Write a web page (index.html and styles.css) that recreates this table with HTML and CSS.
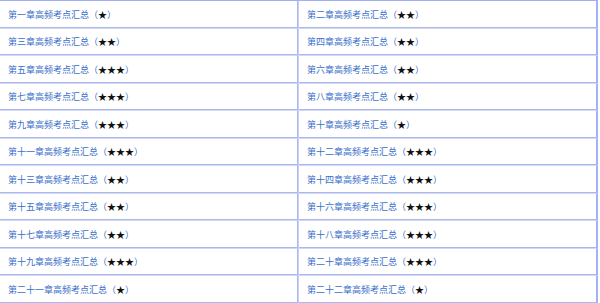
FILE: index.html
```html
<!DOCTYPE html>
<html>
<head>
<meta charset="utf-8">
<link rel="stylesheet" href="styles.css">
</head>
<body>
<div class="grid">
  <div class="cell"><a class="lnk">第一章高频考点汇总<span class="p">（<span class="st">★</span>）</span></a></div>
  <div class="cell"><a class="lnk">第二章高频考点汇总<span class="p">（<span class="st">★★</span>）</span></a></div>
  <div class="cell"><a class="lnk">第三章高频考点汇总<span class="p">（<span class="st">★★</span>）</span></a></div>
  <div class="cell"><a class="lnk">第四章高频考点汇总<span class="p">（<span class="st">★★</span>）</span></a></div>
  <div class="cell"><a class="lnk">第五章高频考点汇总<span class="p">（<span class="st">★★★</span>）</span></a></div>
  <div class="cell"><a class="lnk">第六章高频考点汇总<span class="p">（<span class="st">★★</span>）</span></a></div>
  <div class="cell"><a class="lnk">第七章高频考点汇总<span class="p">（<span class="st">★★★</span>）</span></a></div>
  <div class="cell"><a class="lnk">第八章高频考点汇总<span class="p">（<span class="st">★★</span>）</span></a></div>
  <div class="cell"><a class="lnk">第九章高频考点汇总<span class="p">（<span class="st">★★★</span>）</span></a></div>
  <div class="cell"><a class="lnk">第十章高频考点汇总<span class="p">（<span class="st">★</span>）</span></a></div>
  <div class="cell"><a class="lnk">第十一章高频考点汇总<span class="p">（<span class="st">★★★</span>）</span></a></div>
  <div class="cell"><a class="lnk">第十二章高频考点汇总<span class="p">（<span class="st">★★★</span>）</span></a></div>
  <div class="cell"><a class="lnk">第十三章高频考点汇总<span class="p">（<span class="st">★★</span>）</span></a></div>
  <div class="cell"><a class="lnk">第十四章高频考点汇总<span class="p">（<span class="st">★★★</span>）</span></a></div>
  <div class="cell"><a class="lnk">第十五章高频考点汇总<span class="p">（<span class="st">★★</span>）</span></a></div>
  <div class="cell"><a class="lnk">第十六章高频考点汇总<span class="p">（<span class="st">★★★</span>）</span></a></div>
  <div class="cell"><a class="lnk">第十七章高频考点汇总<span class="p">（<span class="st">★★</span>）</span></a></div>
  <div class="cell"><a class="lnk">第十八章高频考点汇总<span class="p">（<span class="st">★★★</span>）</span></a></div>
  <div class="cell"><a class="lnk">第十九章高频考点汇总<span class="p">（<span class="st">★★★</span>）</span></a></div>
  <div class="cell"><a class="lnk">第二十章高频考点汇总<span class="p">（<span class="st">★★★</span>）</span></a></div>
  <div class="cell"><a class="lnk">第二十一章高频考点汇总<span class="p">（<span class="st">★</span>）</span></a></div>
  <div class="cell"><a class="lnk">第二十二章高频考点汇总<span class="p">（<span class="st">★</span>）</span></a></div>
</div>
</body>
</html>
```
FILE: styles.css
```css
html, body {
  margin: 0;
  padding: 0;
  background: #ffffff;
}
.grid {
  width: 598px;
  display: grid;
  grid-template-columns: 298px 300px;
  grid-auto-rows: 27.5px;
  border-top: 1px solid #9fb0f7;
  box-sizing: border-box;
  font-family: "Noto Sans CJK SC", "Noto Sans", sans-serif;
  font-size: 9px;
}
.cell {
  box-sizing: border-box;
  display: flex;
  align-items: center;
  padding-left: 8px;
  border-bottom: 1px solid #d4d9ee;
  box-shadow: inset 0 -2px 0 -1px #a9b7f5;
}
.cell:nth-child(odd) {
  border-right: 1px solid #a9b7f5;
}
.cell:nth-child(even) {
  border-left: 1px solid #c9d2f5;
  border-right: 2px solid #a3b2f6;
}
.lnk {
  color: #3a6fca;
  text-decoration: none;
  white-space: nowrap;
}
.st {
  color: #111111;
}
```
